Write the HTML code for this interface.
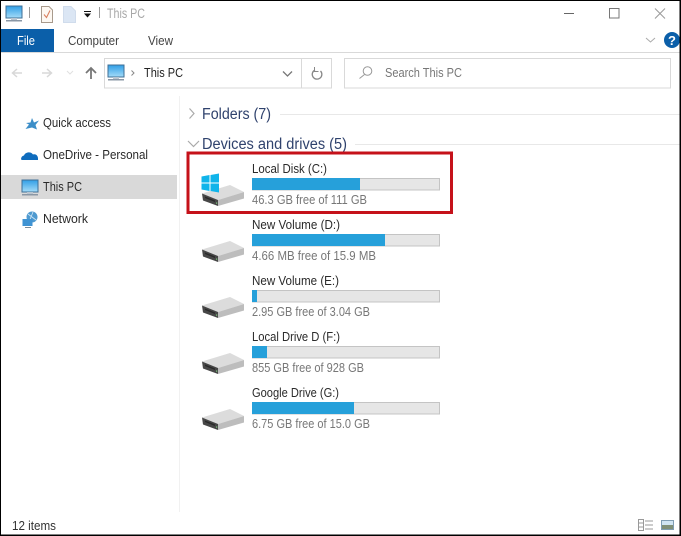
<!DOCTYPE html>
<html><head><meta charset="utf-8"><style>
html,body{margin:0;padding:0;background:#fff;width:681px;height:536px;overflow:hidden}
svg{display:block}
text{font-family:"Liberation Sans",sans-serif;font-size:12.5px;fill:#2a2a2a}
.g{fill:#777}
.h{font-size:15.500px;fill:#2f426d}
.t{fill:#e6e6e6;stroke:#c4c4c4;stroke-width:1}
.b{fill:#26a0da}
</style></head><body>
<svg width="681" height="536" viewBox="0 0 681 536" xmlns="http://www.w3.org/2000/svg">
<defs>
<linearGradient id="sc" x1="0" y1="0" x2="0" y2="1"><stop offset="0" stop-color="#2f9ee6"/><stop offset="1" stop-color="#a5dcf8"/></linearGradient>
<g id="pc">
<rect x="0" y="0" width="16" height="12" fill="url(#sc)" stroke="#3f6f96" stroke-width="1"/>
<rect x="0" y="14" width="16" height="1.5" fill="#8a97a5"/>
<rect x="5" y="12" width="6" height="2" fill="#b9c4cf"/>
</g>
<g id="drive">
<polygon points="202,193.500 230,185 244,192 218,200" fill="#dcdcdc"/>
<polygon points="202,193.500 218,200 218,206 203,200.500" fill="#474747"/>
<polygon points="218,200 244,192 244,198.500 218,206" fill="#bdbdbd"/>
<polygon points="205,196.500 215,200.500 215,202 205,198" fill="#2a2a2a"/>
<rect x="216" y="202.500" width="1.200" height="1.200" fill="#7fcf7f"/>
</g>
</defs>

<!-- title bar -->
<use href="#pc" x="6" y="6"/>
<rect x="29" y="7" width="1" height="11" fill="#9a9a9a"/>
<path d="M41.500 6.500H49L52.500 10V22.500H41.500Z" fill="#fdf8f2" stroke="#a89a8c"/>
<path d="M44 14.500L46.500 17.500L50 10.500" fill="none" stroke="#d9805f" stroke-width="1.100"/>
<path d="M63.500 6.500H71L75.500 11V22.500H63.500Z" fill="#dbe6f4" stroke="#d0dcec"/>
<rect x="84" y="11" width="7" height="1" fill="#111"/>
<path d="M84 13.500H91L87.500 17.500Z" fill="#111"/>
<rect x="99" y="7" width="1" height="11" fill="#9a9a9a"/>
<text x="107" y="18" textLength="38" lengthAdjust="spacingAndGlyphs" style="fill:#a8a8a8;font-size:13.500px">This PC</text>

<!-- window controls -->
<rect x="564" y="13" width="10" height="1" fill="#666"/>
<rect x="609.500" y="8.500" width="9.500" height="9.500" fill="none" stroke="#777"/>
<path d="M655 8.500L665 18.500M665 8.500L655 18.500" stroke="#999" stroke-width="1" fill="none"/>

<!-- ribbon tabs -->
<rect x="1" y="29" width="53" height="23" fill="#0b5fa9"/>
<text x="17" y="45" textLength="18" lengthAdjust="spacingAndGlyphs" style="fill:#fff">File</text>
<text x="68" y="45" textLength="51" lengthAdjust="spacingAndGlyphs" style="fill:#444">Computer</text>
<text x="148" y="45" textLength="25" lengthAdjust="spacingAndGlyphs" style="fill:#444">View</text>
<rect x="0" y="52" width="681" height="1" fill="#d9d9d9"/>
<path d="M646 38L650.500 42L655 38" fill="none" stroke="#aaa"/>
<circle cx="672" cy="40" r="8" fill="#0b5fa9"/>
<text x="672" y="45" text-anchor="middle" style="font-size:13px;font-weight:bold;fill:#fff">?</text>

<!-- navigation -->
<path d="M22 73H13M17 69L12.500 73L17 77" fill="none" stroke="#d8d8d8" stroke-width="1.500"/>
<path d="M42 73H51M47 69L51.500 73L47 77" fill="none" stroke="#d8d8d8" stroke-width="1.500"/>
<path d="M67 71L70 74L73 71" fill="none" stroke="#e0e0e0"/>
<path d="M91 79V68M86 73L91 68L96 73" fill="none" stroke="#777" stroke-width="1.800"/>

<rect x="104.500" y="58.500" width="227" height="29.500" fill="#fff" stroke="#d9d9d9"/>
<rect x="301" y="59" width="1" height="29" fill="#d9d9d9"/>
<use href="#pc" x="108" y="65"/>
<path d="M131.500 70.500L134 73L131.500 75.500" fill="none" stroke="#888"/>
<text x="144" y="77" textLength="39" lengthAdjust="spacingAndGlyphs" style="fill:#222">This PC</text>
<path d="M283 71.500L287.500 76L292 71.500" fill="none" stroke="#777" stroke-width="1.300"/>
<path d="M320.500 71A4.800 4.800 0 1 1 315 70" fill="none" stroke="#888" stroke-width="1.300"/>
<path d="M314.500 67V71.500H318.500" fill="none" stroke="#888"/>

<rect x="344.500" y="58.500" width="326" height="29.500" fill="#fff" stroke="#d9d9d9"/>
<circle cx="367.500" cy="71" r="4.300" fill="none" stroke="#999"/>
<path d="M364.500 74.500L359.500 78.500" stroke="#999" fill="none"/>
<text x="385" y="77" textLength="77" lengthAdjust="spacingAndGlyphs" style="fill:#777">Search This PC</text>

<!-- sidebar -->
<rect x="1" y="175" width="176" height="24" fill="#d9d9d9"/>
<rect x="179" y="96" width="1" height="416" fill="#f1f1f1"/>
<path d="M32 118L34 122.500L39 120.500L35.500 125L37 129.500L32 127.500L25.500 129L29 124.500L26 123L30.500 122.500Z" fill="#3c8ec8"/>
<text x="43" y="127" textLength="68" lengthAdjust="spacingAndGlyphs">Quick access</text>
<path d="M22 160C20 160 21.500 155.500 24 155.500C25 152 31 151 33 154.500C36 153.500 38.500 156 38 160Z" fill="#0f6cbd"/>
<text x="43" y="159" textLength="105" lengthAdjust="spacingAndGlyphs">OneDrive - Personal</text>
<use href="#pc" x="22" y="180"/>
<text x="43" y="191" textLength="39" lengthAdjust="spacingAndGlyphs">This PC</text>
<circle cx="32" cy="217" r="5.500" fill="#4f9ad0"/>
<path d="M28 214L36 220M33 212L29 222" stroke="#cfe6f5" fill="none" stroke-width=".8"/>
<rect x="22.500" y="219" width="10" height="7" fill="#3f93d3"/>
<rect x="25" y="227" width="6" height="1" fill="#7a8a98"/>
<text x="43" y="223" textLength="45" lengthAdjust="spacingAndGlyphs">Network</text>

<!-- groups -->
<path d="M189.500 108.500L194 113.500L189.500 118.500" fill="none" stroke="#aaa" stroke-width="1.200"/>
<text class="h" x="202" y="119" textLength="69" lengthAdjust="spacingAndGlyphs">Folders (7)</text>
<rect x="280" y="114" width="400" height="1" fill="#e8e8e8"/>
<path d="M188 141L193.500 146.500L199 141" fill="none" stroke="#aaa" stroke-width="1.200"/>
<text class="h" x="202" y="149" textLength="145" lengthAdjust="spacingAndGlyphs">Devices and drives (5)</text>
<rect x="355" y="144" width="325" height="1" fill="#e8e8e8"/>

<!-- drive C -->
<use href="#drive"/>
<path d="M201.500 176.500L209.500 175V182.500H201.500ZM210.500 175L219 173.500V182.500H210.500ZM201.500 183.500H209.500V191L201.500 189.500ZM210.500 183.500H219V192.500L210.500 191Z" fill="#10b4ea"/>
<text x="252" y="173" textLength="75" lengthAdjust="spacingAndGlyphs">Local Disk (C:)</text>
<rect class="t" x="252.500" y="178.500" width="187" height="11.500"/>
<rect class="b" x="252" y="178" width="108" height="12"/>
<text class="g" x="252" y="204" textLength="115" lengthAdjust="spacingAndGlyphs">46.3 GB free of 111 GB</text>

<!-- drive D -->
<use href="#drive" y="56"/>
<text x="252" y="229" textLength="88" lengthAdjust="spacingAndGlyphs">New Volume (D:)</text>
<rect class="t" x="252.500" y="234.500" width="187" height="11.500"/>
<rect class="b" x="252" y="234" width="133" height="12"/>
<text class="g" x="252" y="260" textLength="124" lengthAdjust="spacingAndGlyphs">4.66 MB free of 15.9 MB</text>

<!-- drive E -->
<use href="#drive" y="112"/>
<text x="252" y="285" textLength="87" lengthAdjust="spacingAndGlyphs">New Volume (E:)</text>
<rect class="t" x="252.500" y="290.500" width="187" height="11.500"/>
<rect class="b" x="252" y="290" width="5" height="12"/>
<text class="g" x="252" y="316" textLength="118" lengthAdjust="spacingAndGlyphs">2.95 GB free of 3.04 GB</text>

<!-- drive F -->
<use href="#drive" y="168"/>
<text x="252" y="341" textLength="88" lengthAdjust="spacingAndGlyphs">Local Drive D (F:)</text>
<rect class="t" x="252.500" y="346.500" width="187" height="11.500"/>
<rect class="b" x="252" y="346" width="15" height="12"/>
<text class="g" x="252" y="372" textLength="112" lengthAdjust="spacingAndGlyphs">855 GB free of 928 GB</text>

<!-- drive G -->
<use href="#drive" y="224"/>
<text x="252" y="397" textLength="87" lengthAdjust="spacingAndGlyphs">Google Drive (G:)</text>
<rect class="t" x="252.500" y="402.500" width="187" height="11.500"/>
<rect class="b" x="252" y="402" width="102" height="12"/>
<text class="g" x="252" y="428" textLength="118" lengthAdjust="spacingAndGlyphs">6.75 GB free of 15.0 GB</text>

<!-- highlight -->
<rect x="188" y="153" width="263.500" height="59.500" fill="none" stroke="#c5111a" stroke-width="3"/>

<!-- status bar -->
<text x="12" y="530" textLength="44" lengthAdjust="spacingAndGlyphs" style="fill:#333">12 items</text>
<path d="M638.500 519.500H643.500V530.500H638.500ZM638.500 523H643.500M638.500 527H643.500" fill="none" stroke="#999"/>
<path d="M645 521H653M645 525H653M645 529H653" fill="none" stroke="#999"/>
<rect x="661.500" y="520.500" width="12" height="9" fill="#cfe4f2" stroke="#7f9db3"/>
<rect x="662" y="525" width="11" height="4" fill="#7f8f77"/>

<!-- window frame -->
<rect x="0" y="0" width="681" height="1" fill="#000"/>
<rect x="0" y="0" width="1" height="536" fill="#000"/>
<rect x="679.500" y="0" width="1.500" height="536" fill="#000"/>
<rect x="0" y="534.500" width="681" height="1.500" fill="#000"/>
</svg>
</body></html>
